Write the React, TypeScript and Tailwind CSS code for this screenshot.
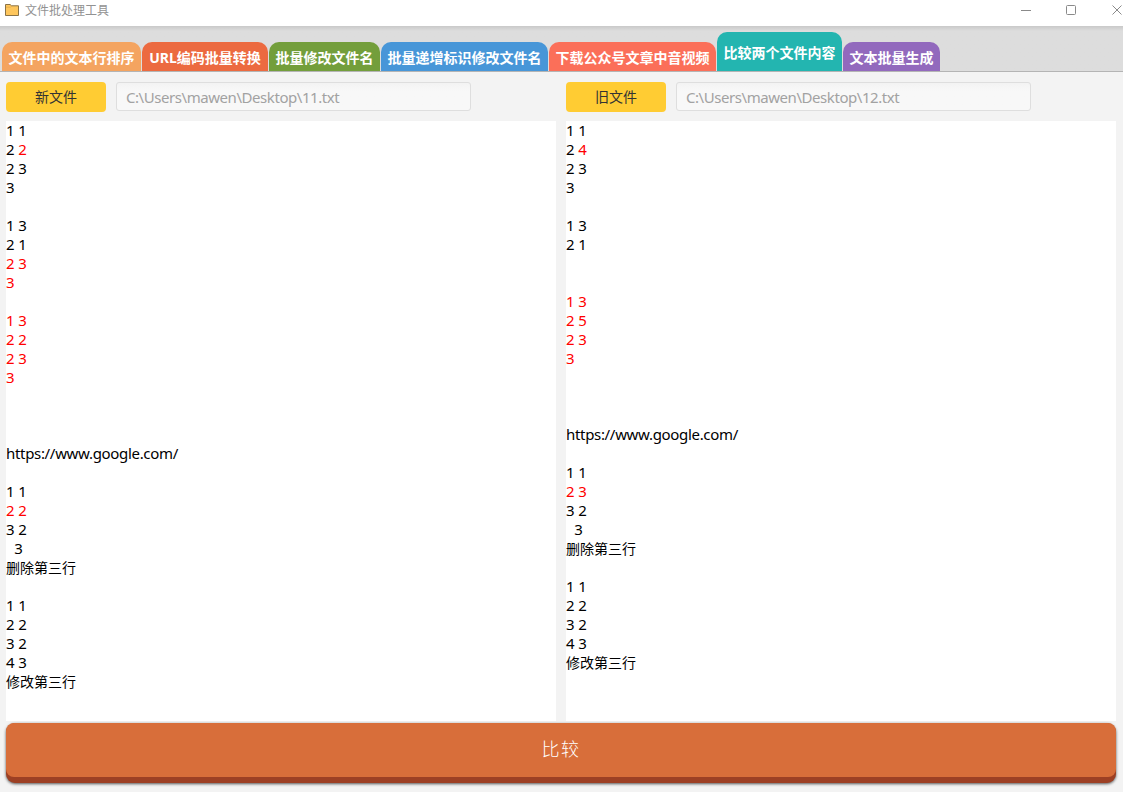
const tabs = [
  { label: '文件中的文本行排序', style: 'w-[139px] h-[29px] bg-[#f4a460]' },
  { label: 'URL编码批量转换', style: 'w-[126px] h-[29px] bg-[#ec6a40]' },
  { label: '批量修改文件名', style: 'w-[111px] h-[29px] bg-[#739e3b]' },
  { label: '批量递增标识修改文件名', style: 'w-[167px] h-[29px] bg-[#4796d8]' },
  { label: '下载公众号文章中音视频', style: 'w-[167px] h-[29px] bg-[#fb6f59]' },
  { label: '比较两个文件内容', style: 'w-[125px] h-[39px] pb-px bg-[#23b5b0]' },
  { label: '文本批量生成', style: 'w-[97px] h-[29px] bg-[#9269bd]' },
];

type Run = { text: string; changed?: boolean };
type Line = Run[];

const same = (text: string): Line => [{ text }];
const diff = (text: string): Line => [{ text, changed: true }];
const blank: Line = [];

const newLines: Line[] = [
  same('1 1'),
  [{ text: '2 ' }, { text: '2', changed: true }],
  same('2 3'),
  same('3'),
  blank,
  same('1 3'),
  same('2 1'),
  diff('2 3'),
  diff('3'),
  blank,
  diff('1 3'),
  diff('2 2'),
  diff('2 3'),
  diff('3'),
  blank,
  blank,
  blank,
  same('https://www.google.com/'),
  blank,
  same('1 1'),
  diff('2 2'),
  same('3 2'),
  same('  3'),
  same('删除第三行'),
  blank,
  same('1 1'),
  same('2 2'),
  same('3 2'),
  same('4 3'),
  same('修改第三行'),
];

const oldLines: Line[] = [
  same('1 1'),
  [{ text: '2 ' }, { text: '4', changed: true }],
  same('2 3'),
  same('3'),
  blank,
  same('1 3'),
  same('2 1'),
  blank,
  blank,
  diff('1 3'),
  diff('2 5'),
  diff('2 3'),
  diff('3'),
  blank,
  blank,
  blank,
  same('https://www.google.com/'),
  blank,
  same('1 1'),
  diff('2 3'),
  same('3 2'),
  same('  3'),
  same('删除第三行'),
  blank,
  same('1 1'),
  same('2 2'),
  same('3 2'),
  same('4 3'),
  same('修改第三行'),
];

const isHan = (line: Line) => line.some((run) => /[\u4e00-\u9fff]/.test(run.text));

function TitleBar() {
  return (
    <header className="flex h-[26px] shrink-0 items-start bg-white">
      <svg className="ml-[5px] mt-1 h-3 w-[14px]" viewBox="0 0 14 12" fill="none">
        <path d="M.5.5h4.6l1.5 1.3h6.9v9.7H.5z" fill="#fec65c" stroke="#8a7347" />
        <path d="M1 3.2h4.3l1.5-1.1" stroke="#dca648" strokeWidth=".7" />
      </svg>
      <span className="ml-[6px] mt-[3px] text-[12px] leading-4 text-[#929292]">文件批处理工具</span>
      <svg className="ml-auto mt-[5px] h-[11px] w-[102px]" viewBox="0 0 102 11" fill="none" stroke="#8a8a8a">
        <path d="M0 5.5h10" />
        <rect x="45.5" y=".5" width="9" height="9" rx="1" />
        <path d="M91.5.5l9 9M100.500.5l-9 9" />
      </svg>
    </header>
  );
}

function FilePane({ button, path, lines }: { button: string; path: string; lines: Line[] }) {
  return (
    <section className="flex w-[550px] flex-col">
      <div className="flex h-[49px] items-start gap-[10px] pt-[10px]">
        <button className="h-[30px] w-[100px] rounded-[4px] bg-[#ffcc33] text-[14px] leading-[30px] text-[#333]">
          {button}
        </button>
        <input
          readOnly
          value={path}
          className="h-[29px] w-[355px] rounded-[3px] border border-[#dedede] bg-linear-to-b from-[#f3f3f3] to-[#f8f8f8] to-30% px-[9px] text-[15px] tracking-[-0.44px] text-[#a2a2a2] outline-none"
        />
      </div>
      <div className="h-[600px] whitespace-pre bg-white leading-[19px] text-black">
        {lines.map((line, i) => (
          <div
            key={i}
            className={isHan(line) ? 'h-[19px] text-[14px]' : 'h-[19px] text-[15px] tracking-[-0.32px] [word-spacing:0.5px]'}
          >
            {line.map((run, j) => (
              <span key={j} className={run.changed ? 'text-[#ff0000]' : ''}>
                {run.text}
              </span>
            ))}
          </div>
        ))}
      </div>
    </section>
  );
}

export default function App() {
  return (
    <div className="flex h-[792px] w-[1123px] flex-col overflow-hidden bg-[#f3f3f3] font-['Noto_Sans','Noto_Sans_CJK_SC',sans-serif]">
      <TitleBar />
      <nav className="flex h-[46px] shrink-0 items-end gap-px border-b border-[#b4b4b4] bg-linear-to-b from-[#c9c9c9] to-[#dddddd] to-[5px] pl-[2px]">
        {tabs.map((tab) => (
          <button
            key={tab.label}
            className={`flex shrink-0 items-center justify-center whitespace-nowrap rounded-t-[10px] pt-[3px] text-[14px] font-bold leading-5 text-white ${tab.style}`}
          >
            {tab.label}
          </button>
        ))}
      </nav>
      <main className="flex shrink-0 gap-[10px] pl-[6px]">
        <FilePane button="新文件" path="C:\Users\mawen\Desktop\11.txt" lines={newLines} />
        <FilePane button="旧文件" path="C:\Users\mawen\Desktop\12.txt" lines={oldLines} />
      </main>
      <button className="ml-[6px] mt-[2px] h-[60px] w-[1110px] shrink-0 rounded-[9px] bg-[#9d4024] shadow-[0_1px_3px_rgba(0,0,0,0.65)]">
        <span className="-mt-[6px] flex h-[54px] items-center justify-center rounded-[8px] bg-[#d86e3a] pb-[2px] text-[18px] font-light tracking-[1.5px] text-white">
          比较
        </span>
      </button>
    </div>
  );
}
